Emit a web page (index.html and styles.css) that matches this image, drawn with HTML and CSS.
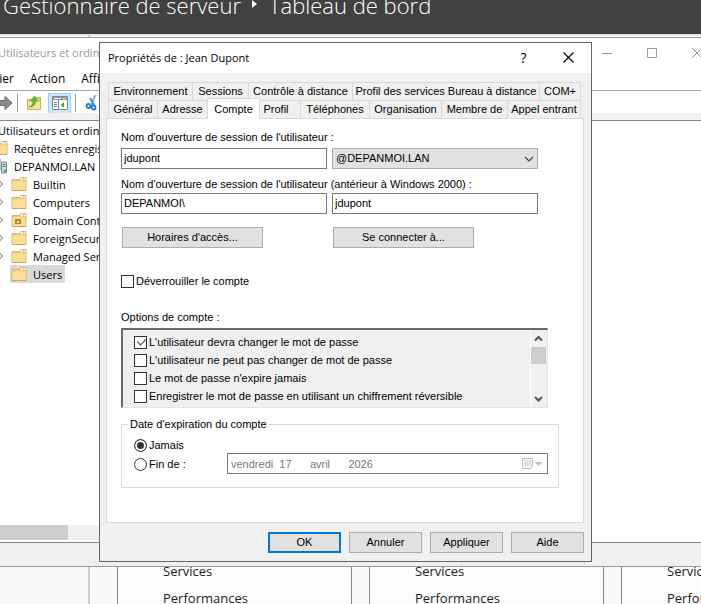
FILE: index.html
```html
<!DOCTYPE html>
<html lang="fr">
<head>
  <meta charset="UTF-8">
  <meta name="viewport" content="width=device-width, initial-scale=1.0">
  <title>Propriétés de : Jean Dupont</title>
  <link rel="stylesheet" href="styles.css">
</head>
<body>
  <svg width="0" height="0" class="symbols" aria-hidden="true">
    <symbol id="folder" viewBox="0 0 16 16">
      <path d="M1 3.500h8l1-2h5v13H1z" fill="#f0cd7c" stroke="#d9b765"/>
      <path d="M10 2h4.500v2H10z" fill="#fff"/>
      <path d="M11.500 2.500h2v1h-2z" fill="#6fa8dc"/>
      <path d="M1.500 5.500H14.500v8.500h-13z" fill="#fbdf98"/>
      <path d="M1 14.500H15" stroke="#cda650"/>
    </symbol>
    <symbol id="expander" viewBox="0 0 8 10">
      <path d="M2 1.500L5.500 5L2 8.500" fill="none" stroke="#a6a6a6" stroke-width="1.500"/>
    </symbol>
  </svg>

  <div class="desktop">
    <!-- Gestionnaire de serveur -->
    <header class="server-header">
      <span>Gestionnaire de serveur</span>
      <svg width="6" height="10" viewBox="0 0 6 10"><path d="M0 0l5 4l-5 4z" fill="#fff"/></svg>
      <span>Tableau de bord</span>
    </header>
    <div class="server-body">
      <div class="server-side"></div>
      <main class="server-cards">
        <ul class="card"><li>Services</li><li>Performances</li></ul>
        <ul class="card"><li>Services</li><li>Performances</li></ul>
        <ul class="card"><li>Services</li><li>Performances</li></ul>
      </main>
    </div>

    <!-- Console Active Directory -->
    <section class="console">
      <div class="console-title">
        <span>Utilisateurs et ordinateurs Active Directory</span>
        <div class="window-buttons">
          <svg width="10" height="10" viewBox="0 0 10 10"><path d="M0 5.500h10" stroke="#999"/></svg>
          <svg width="10" height="10" viewBox="0 0 10 10"><path d="M.5.5h9v9h-9z" fill="none" stroke="#999"/></svg>
          <svg width="10" height="10" viewBox="0 0 10 10"><path d="M0 0l10 10M10 0L0 10" stroke="#999"/></svg>
        </div>
      </div>
      <nav class="console-menu">
        <a href="#">Fichier</a>
        <a href="#">Action</a>
        <a href="#">Affichage</a>
        <a href="#">?</a>
      </nav>
      <div class="toolbar">
        <svg width="16" height="16" viewBox="0 0 16 16"><path d="M15 5.500H8v-4L1 8l7 6.500v-4h7z" fill="#999" stroke="#666"/></svg>
        <svg width="16" height="16" viewBox="0 0 16 16"><path d="M1 5.500h7v-4L15 8l-7 6.500v-4H1z" fill="#8c8c8c" stroke="#686868"/></svg>
        <span class="sep"></span>
        <svg class="tool-folder" width="16" height="16" viewBox="0 0 16 16">
          <path d="M1.500 4.500h7l1-2h5v12h-13z" fill="#efcc74" stroke="#d3ae58"/>
          <path d="M2 7h12v7H2z" fill="#fae09a"/>
          <path d="M3 12c3-1 4-3 4-6H4.500L8.500 1L12 6H9.500c0 4-2 6-6.500 6z" fill="#4cc22c" stroke="#399c20" stroke-width=".5"/>
        </svg>
        <button type="button" class="tool-active" aria-label="Arborescence">
          <svg width="16" height="14" viewBox="0 0 16 14">
            <path d="M.5.5h15v13H.5z" fill="#fff" stroke="#7d8790"/>
            <path d="M1 1h14v3H1z" fill="#8d979f"/>
            <path d="M2 2.500h7M10.500 2.500h1M12.500 2.500h1" stroke="#fff"/>
            <path d="M6.500 4v9" stroke="#7d8790"/>
            <path d="M2 6.500h3M2 8.500h3M2 10.500h3" stroke="#7d8790"/>
            <path d="M12 6v6L8.500 9z" fill="#3fae2a"/>
          </svg>
        </button>
        <span class="sep"></span>
        <svg class="tool-cut" width="16" height="16" viewBox="0 0 16 16">
          <path d="M11.500 0L7 10" stroke="#8cb4d4" stroke-width="2"/>
          <path d="M6 3l4 7" stroke="#4a8fca" stroke-width="2"/>
          <circle cx="4.500" cy="11" r="2" fill="none" stroke="#1b7fd0" stroke-width="1.800"/>
          <circle cx="9.500" cy="12.500" r="2" fill="none" stroke="#1b7fd0" stroke-width="1.800"/>
        </svg>
      </div>
      <div class="band"></div>
      <ul class="tree">
        <li>Utilisateurs et ordinateurs Active</li>
        <li class="level1"><svg width="16" height="16"><use href="#folder"/></svg>Requêtes enregistrées</li>
        <li class="level1">
          <svg width="16" height="16" viewBox="0 0 16 16">
            <path d="M3 1h5v11H3z" fill="#cdd6dd" stroke="#7d8790"/>
            <path d="M9.500 4h5v11h-5z" fill="#cdd6dd" stroke="#7d8790"/>
            <path d="M4 3.500h3M4 5.500h3M10.500 6.500h3M10.500 8.500h3" stroke="#66727d"/>
            <path d="M5 9h2v2H5zM12 12h2v2h-2z" fill="#35c228"/>
          </svg>DEPANMOI.LAN
        </li>
        <li class="level2"><svg width="8" height="10"><use href="#expander"/></svg><span class="node"><svg width="16" height="16"><use href="#folder"/></svg>Builtin</span></li>
        <li class="level2"><svg width="8" height="10"><use href="#expander"/></svg><span class="node"><svg width="16" height="16"><use href="#folder"/></svg>Computers</span></li>
        <li class="level2"><svg width="8" height="10"><use href="#expander"/></svg><span class="node"><svg width="16" height="16"><use href="#folder"/><path d="M4 7h6v5H4z" fill="#b58a1c"/><path d="M6 9h2v2H6z" fill="#ffe9a8"/></svg>Domain Controllers</span></li>
        <li class="level2"><svg width="8" height="10"><use href="#expander"/></svg><span class="node"><svg width="16" height="16"><use href="#folder"/></svg>ForeignSecurityPrincipals</span></li>
        <li class="level2"><svg width="8" height="10"><use href="#expander"/></svg><span class="node"><svg width="16" height="16"><use href="#folder"/></svg>Managed Service Accounts</span></li>
        <li class="level2"><svg width="8" height="10"></svg><span class="node selected"><svg width="16" height="16"><use href="#folder"/></svg>Users</span></li>
      </ul>
      <div class="tree-scroll"><span></span></div>
      <div class="status"><span></span><span></span><span></span></div>
    </section>

    <!-- Boîte de dialogue Propriétés -->
    <form class="dialog">
      <div class="dialog-title">
        <span>Propriétés de : Jean Dupont</span>
        <button type="button" class="help">?</button>
        <button type="button" aria-label="Fermer">
          <svg width="11" height="11" viewBox="0 0 11 11"><path d="M.5.5l10 10M10.500.5l-10 10" stroke="#000" stroke-width="1.100"/></svg>
        </button>
      </div>
      <div class="dialog-body">
        <div class="tabs tabs-back">
          <button type="button">Environnement</button>
          <button type="button">Sessions</button>
          <button type="button">Contrôle à distance</button>
          <button type="button">Profil des services Bureau à distance</button>
          <button type="button">COM+</button>
        </div>
        <div class="tabs tabs-front">
          <button type="button">Général</button>
          <button type="button">Adresse</button>
          <button type="button" class="active">Compte</button>
          <button type="button" class="after-active">Profil</button>
          <button type="button">Téléphones</button>
          <button type="button">Organisation</button>
          <button type="button">Membre de</button>
          <button type="button">Appel entrant</button>
        </div>

        <div class="panel">
          <label for="upn">Nom d'ouverture de session de l'utilisateur :</label>
          <div class="pair">
            <input type="text" id="upn" value="jdupont">
            <div class="combo">
              <select aria-label="Suffixe UPN">
                <option>@DEPANMOI.LAN</option>
              </select>
              <svg width="10" height="6" viewBox="0 0 10 6"><path d="M1 1l4 4l4-4" fill="none" stroke="#444" stroke-width="1.200"/></svg>
            </div>
          </div>
          <label for="sam">Nom d'ouverture de session de l'utilisateur (antérieur à Windows 2000) :</label>
          <div class="pair close">
            <input type="text" value="DEPANMOI\" aria-label="Domaine" readonly>
            <input type="text" id="sam" value="jdupont">
          </div>
          <div class="pair actions">
            <button type="button" class="btn">Horaires d'accès...</button>
            <button type="button" class="btn">Se connecter à...</button>
          </div>

          <label class="check unlock"><input type="checkbox">Déverrouiller le compte</label>

          <p class="caption">Options de compte :</p>
          <div class="options">
            <div class="options-list">
              <label class="check"><input type="checkbox" checked>L'utilisateur devra changer le mot de passe</label>
              <label class="check"><input type="checkbox">L'utilisateur ne peut pas changer de mot de passe</label>
              <label class="check"><input type="checkbox">Le mot de passe n'expire jamais</label>
              <label class="check"><input type="checkbox">Enregistrer le mot de passe en utilisant un chiffrement réversible</label>
            </div>
            <div class="scrollbar">
              <svg width="15" height="17" viewBox="0 0 15 17"><path d="M4 10.500l3.500-3.500l3.500 3.500" fill="none" stroke="#555" stroke-width="2"/></svg>
              <span class="thumb"></span>
              <svg width="15" height="17" viewBox="0 0 15 17"><path d="M4 7l3.500 3.500L11 7" fill="none" stroke="#555" stroke-width="2"/></svg>
            </div>
          </div>

          <fieldset>
            <legend>Date d'expiration du compte</legend>
            <label class="check"><input type="radio" name="expire" checked>Jamais</label>
            <div class="until">
              <label class="check"><input type="radio" name="expire">Fin de :</label>
              <div class="date">
                <input type="text" value="vendredi  17      avril      2026" aria-label="Date de fin" disabled>
                <svg width="22" height="14" viewBox="0 0 22 14">
                  <path d="M1.500 1.500h10v8l-2 2h-8z" fill="#f4f6f8" stroke="#bdbdc4"/>
                  <path d="M3 4h7M3 6h7M3 8h7M4.500 3v6M6.500 3v6M8.500 3v6" stroke="#cdd5dc" stroke-width=".7"/>
                  <path d="M14 5h7l-3.500 4z" fill="#c0c0bc"/>
                </svg>
              </div>
            </div>
          </fieldset>
        </div>

        <div class="footer">
          <button type="submit" class="btn default">OK</button>
          <button type="button" class="btn">Annuler</button>
          <button type="button" class="btn">Appliquer</button>
          <button type="button" class="btn">Aide</button>
        </div>
      </div>
    </form>
  </div>
</body>
</html>
```
FILE: styles.css
```css
* {
  box-sizing: border-box;
}
body {
  margin: 0;
  font-family: "Open Sans", "Noto Sans", sans-serif;
  font-size: 12px;
  color: #000;
}
ul {
  list-style: none;
  margin: 0;
  padding: 0;
}
button, input, select {
  font: inherit;
  color: inherit;
  border-radius: 0;
}
svg {
  flex: none;
}
.symbols {
  display: none;
}
.desktop {
  position: relative;
  display: flex;
  flex-direction: column;
  height: 100vh;
  overflow: hidden;
  background: #fff;
}

/* Gestionnaire de serveur */
.server-header {
  display: flex;
  align-items: flex-start;
  gap: 11px;
  height: 34px;
  padding-left: 3px;
  background: #414141;
  color: #fff;
  font-size: 22px;
  font-weight: 300;
  line-height: 10px;
  white-space: nowrap;
}
.server-body {
  flex: 1;
  display: flex;
  min-height: 0;
  border-top: 1px solid #ddd;
  background: #f8f8f8;
}
.server-side {
  flex: none;
  width: 90px;
  border-right: 2px solid #ccc;
}
.server-cards {
  display: flex;
  align-items: flex-end;
  gap: 17px;
  padding-left: 27px;
  margin-bottom: -8px;
}
.card {
  flex: none;
  width: 235px;
  padding: 20px 45px 0;
  border: 1px solid #888;
  border-bottom: 0;
  background: #fcfcfc;
  color: #222;
  font-size: 13px;
  line-height: 27px;
}

/* Console */
.console {
  position: absolute;
  top: 37px;
  left: -24px;
  right: -8px;
  bottom: 37px;
  display: flex;
  flex-direction: column;
  border: 1px solid #999;
  background: #fff;
  white-space: nowrap;
}
.console-title {
  display: flex;
  justify-content: space-between;
  align-items: center;
  height: 29px;
  padding: 0 6px 0 21px;
  color: #999;
  font-size: 11px;
}
.window-buttons {
  display: flex;
  gap: 35px;
}
.console-menu {
  display: flex;
  gap: 16px;
  height: 24px;
  border-bottom: 1px solid #aaa;
  line-height: 23px;
}
.console-menu a {
  color: #000;
  text-decoration: none;
}
.toolbar {
  display: flex;
  align-items: center;
  gap: 4px;
  height: 22px;
  padding-top: 2px;
}
.sep {
  width: 1px;
  height: 18px;
  background: #999;
}
.tool-folder {
  margin-left: 4px;
}
.tool-active {
  display: flex;
  align-items: center;
  justify-content: center;
  width: 23px;
  height: 21px;
  margin-left: 2px;
  padding: 0;
  border: 1px solid #99d1ff;
  background: #cce8ff;
}
.tool-cut {
  margin-left: 4px;
}
.band {
  height: 8px;
  background: #f0f0f0;
  border-bottom: 1px solid #828790;
}
.tree {
  flex: 1;
  font-size: 11px;
}
.tree li {
  display: flex;
  align-items: center;
  height: 18px;
  padding-left: 21px;
}
.tree .level1 {
  gap: 6px;
  padding-left: 15px;
}
.tree .level2 {
  gap: 5px;
  padding-left: 20px;
}
.node {
  display: flex;
  align-items: center;
  gap: 6px;
  height: 18px;
  padding: 0 3px 0 1px;
}
.selected {
  background: #d9d9d9;
}
.tree-scroll {
  width: 200px;
  height: 15px;
  margin-bottom: 2px;
  background: #f0f0f0;
}
.tree-scroll span {
  display: block;
  width: 91px;
  height: 15px;
  background: #cdcdcd;
}
.status {
  display: flex;
  height: 24px;
  padding: 2px 0 1px;
  border-top: 1px solid #828790;
  background: #f0f0f0;
}
.status span {
  width: 133px;
  border-right: 1px solid #d7d7d7;
}
.status span:first-child {
  width: 524px;
}
.status span:last-child {
  border: 0;
}

/* Boîte de dialogue */
.dialog {
  position: absolute;
  top: 42px;
  left: 99px;
  width: 493px;
  border: 1px solid #666;
  background: #f0f0f0;
}
.dialog-title {
  display: flex;
  align-items: center;
  height: 30px;
  padding: 0 0 1px 8px;
  background: #fff;
  font-size: 11px;
}
.dialog-title span {
  flex: 1;
}
.dialog-title button {
  display: flex;
  align-items: center;
  justify-content: center;
  width: 45px;
  height: 29px;
  padding: 0;
  border: 0;
  background: none;
}
.dialog-title .help {
  font-size: 14px;
}
.dialog-body {
  padding: 9px 7px 8px 6px;
  font-family: "Liberation Sans", Arial, sans-serif;
  font-size: 11px;
  line-height: 13px;
}
.tabs {
  display: grid;
  margin: 0 3px 0 2px;
  border-left: 1px solid #d9d9d9;
}
.tabs-back {
  grid-template-columns: 84fr 56fr 104fr 187fr 41fr;
}
.tabs-front {
  grid-template-columns: 49fr 50fr 52fr 41fr 69fr 72fr 66fr 73fr;
}
.tabs button {
  height: 18px;
  padding: 0;
  border: 1px solid #d9d9d9;
  border-width: 1px 1px 0 0;
  background: #f0f0f0;
  line-height: 17px;
  white-space: nowrap;
}
.tabs .active {
  height: 21px;
  margin: -2px 0 -1px -1px;
  z-index: 1;
  border-width: 1px;
  border-bottom: 0;
  background: #fff;
}
.tabs .after-active {
  padding-right: 8px;
}
.panel {
  padding: 12px 24px 34px 14px;
  border: 1px solid #d9d9d9;
  background: #fff;
}
.panel > label {
  display: block;
}
.pair {
  display: grid;
  grid-template-columns: 206px 206px;
  gap: 5px;
  margin: 4px 0 9px;
}
.pair.close {
  margin-top: 2px;
}
.panel input[type="text"] {
  min-width: 0;
  height: 21px;
  padding: 0 2px 1px;
  border: 1px solid #7a7a7a;
  background: #fff;
}
.combo {
  display: grid;
  align-items: center;
}
.combo select, .combo svg {
  grid-area: 1 / 1;
}
.combo select {
  appearance: none;
  height: 21px;
  padding: 0 3px;
  border: 1px solid #adadad;
  background: #e1e1e1;
}
.combo svg {
  justify-self: end;
  margin-right: 4px;
  pointer-events: none;
}
.btn {
  height: 21px;
  padding: 0;
  border: 1px solid #adadad;
  background: #e1e1e1;
}
.actions {
  margin: 13px 1px 0;
}
.actions .btn {
  width: 141px;
}
.check {
  display: flex;
  align-items: center;
  gap: 2px;
  white-space: nowrap;
}
.panel .unlock {
  display: flex;
  margin-top: 27px;
}
.check input {
  appearance: none;
  flex: none;
  width: 13px;
  height: 13px;
  margin: 0;
  border: 1px solid #333;
  background: #fff;
}
.check input[type="checkbox"]:checked::before {
  content: "";
  display: block;
  width: 4px;
  height: 7px;
  margin: 0 0 0 4px;
  border: solid #333;
  border-width: 0 1px 1px 0;
  transform: rotate(45deg);
}
.check input[type="radio"] {
  border-radius: 50%;
}
.check input[type="radio"]:checked {
  background: #333;
  box-shadow: inset 0 0 0 2px #fff;
}
.caption {
  margin: 23px 0 4px;
}
.options {
  display: flex;
  justify-content: space-between;
  width: 427px;
  border: 1px solid #e3e3e3;
  border-top: 2px solid #696969;
  border-left: 2px solid #696969;
  background: #f0f0f0;
}
.options-list {
  padding: 3px 0 2px 11px;
}
.options-list .check {
  height: 18px;
}
.scrollbar {
  display: flex;
  flex-direction: column;
  padding-right: 1px;
  border-left: 1px solid #fff;
}
.scrollbar svg:last-child {
  margin-top: auto;
}
.thumb {
  height: 17px;
  background: #cdcdcd;
}
fieldset {
  min-width: 0;
  margin: 10px 0 0;
  padding: 8px 10px 13px 12px;
  border: 1px solid #dcdcdc;
}
legend {
  margin-left: -6px;
  padding: 0 2px;
}
.until {
  display: flex;
  justify-content: space-between;
  align-items: flex-end;
  margin-top: 1px;
}
.date {
  display: flex;
  align-items: center;
  width: 321px;
  height: 21px;
  border: 1px solid #7a7a7a;
  padding-right: 4px;
}
.until .check {
  height: 19px;
}
.panel .date input {
  flex: 1;
  height: 19px;
  border: 0;
  padding: 0 3px;
  color: #777;
}
.footer {
  display: flex;
  justify-content: flex-end;
  gap: 8px;
  margin-top: 9px;
}
.footer .btn {
  width: 73px;
}
.footer .default {
  border: 2px solid #0078d7;
}
```
